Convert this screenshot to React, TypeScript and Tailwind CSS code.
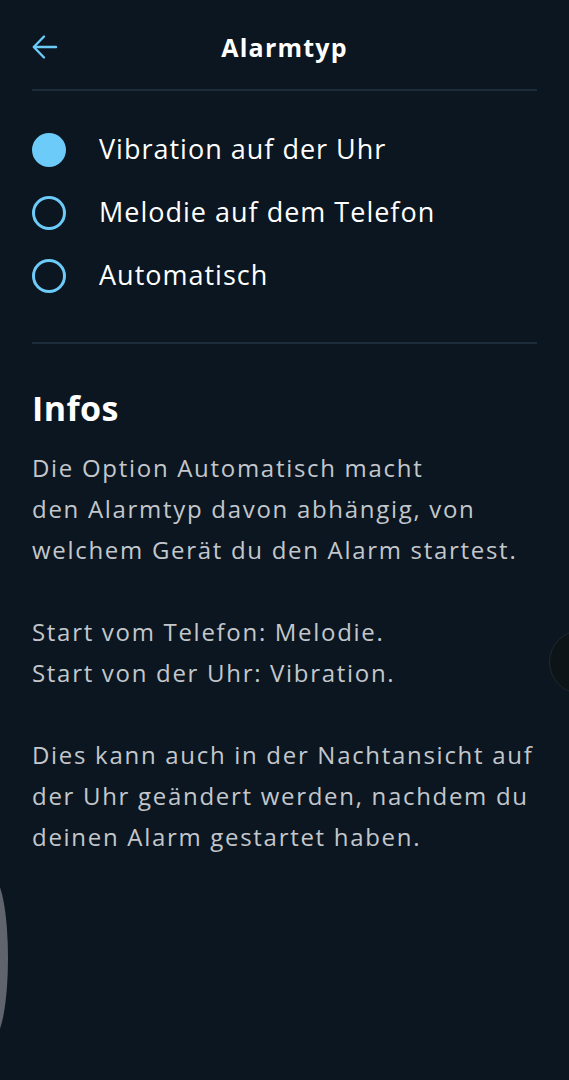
import React from "react";

const font = { fontFamily: "'Open Sans', 'Noto Sans', sans-serif" };

function Radio({ checked, label }: { checked: boolean; label: string }) {
  return (
    <div className="flex items-center h-[63px]">
      <div className="w-[34px] h-[34px] flex items-center justify-center shrink-0">
        {checked ? (
          <div className="w-[34px] h-[34px] rounded-full bg-[#6ccbf8]" />
        ) : (
          <div className="w-[34px] h-[34px] rounded-full border-[3px] border-[#6ccbf8]" />
        )}
      </div>
      <span className="ml-[33px] text-[27px] text-white tracking-[1px]">{label}</span>
    </div>
  );
}

export default function App() {
  return (
    <div className="relative w-[569px] h-[1080px] bg-[#0b1620] overflow-hidden" style={font}>
      <div className="px-[32px]">
        <div className="relative flex items-center justify-center h-[89px]">
          <svg className="absolute left-0 top-[34px]" width="26" height="26" viewBox="0 0 26 26" fill="none" stroke="#6ccbf8" strokeWidth="2.4" strokeLinecap="round" strokeLinejoin="round">
            <path d="M24 13H2" />
            <path d="M12 2.5L1.8 13L12 23.5" />
          </svg>
          <span className="text-white text-[25px] font-bold mt-[6px] tracking-[1.2px]">Alarmtyp</span>
        </div>
        <div className="h-[2px] bg-[#1c2c3a]" />
        <div className="pt-[27px] pb-[35px] flex flex-col">
          <Radio checked label="Vibration auf der Uhr" />
          <Radio checked={false} label="Melodie auf dem Telefon" />
          <Radio checked={false} label="Automatisch" />
        </div>
        <div className="h-[2px] bg-[#1c2c3a]" />
        <h2 className="mt-[44px] text-white text-[34px] font-bold leading-[40px] tracking-[0.4px]">Infos</h2>
        <div className="mt-[19px] text-[#c3c7cc] text-[24px] leading-[41px] tracking-[1.7px]">
          <p className="whitespace-nowrap">Die Option Automatisch macht<br />den Alarmtyp davon abhängig, von<br />welchem Gerät du den Alarm startest.</p>
          <p className="mt-[41px] whitespace-nowrap">Start vom Telefon: Melodie.<br />Start von der Uhr: Vibration.</p>
          <p className="mt-[41px] whitespace-nowrap">Dies kann auch in der Nachtansicht auf<br />der Uhr geändert werden, nachdem du<br />deinen Alarm gestartet haben.</p>
        </div>
      </div>
      <div className="absolute left-[549px] top-[630px] w-[64px] h-[64px] rounded-full bg-[#0d1418] border border-[#1f2830]" />
      <div className="absolute left-[-22px] top-[878px] w-[30px] h-[160px] rounded-[50%] bg-[#60646c]" />
    </div>
  );
}
